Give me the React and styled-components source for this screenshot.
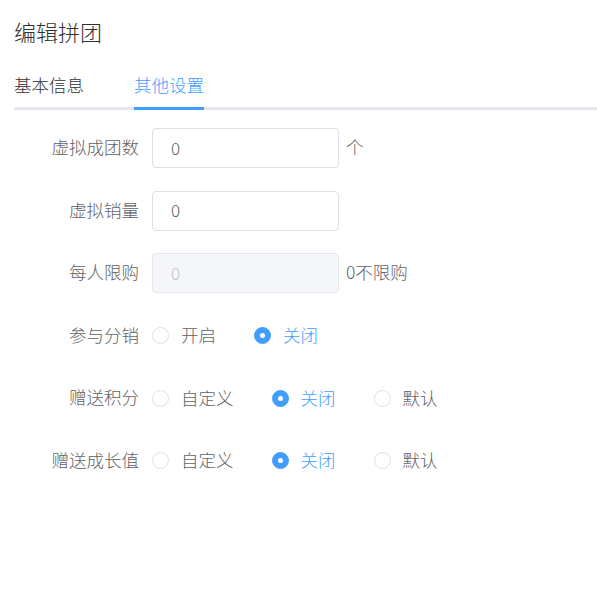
import React, { useState } from 'react';
import styled, { createGlobalStyle } from 'styled-components';

const GlobalStyle = createGlobalStyle`
  html, body {
    margin: 0;
    padding: 0;
    background: #fff;
  }
  body {
    font-family: "Noto Sans CJK SC", "Liberation Sans", sans-serif;
    font-weight: 300;
    -webkit-font-smoothing: antialiased;
  }
`;

const StyledPage = styled.div`
  padding: 0 0 0 14px;
  width: 583px;
`;

const StyledTitle = styled.h1`
  margin: 0;
  padding: 19px 0 21px;
  font-size: 22px;
  line-height: 24px;
  font-weight: 300;
  color: #303133;
`;

const StyledTabNav = styled.div`
  display: flex;
  gap: 50px;
  border-bottom: 3px solid #e4e7ed;
`;

const StyledTab = styled.div`
  font-size: 17.5px;
  line-height: 42px;
  padding-bottom: 1px;
  margin-bottom: -3px;
  color: ${props => (props.active ? '#409eff' : '#303133')};
  border-bottom: 3px solid ${props => (props.active ? '#409eff' : 'transparent')};
  cursor: pointer;
`;

const StyledForm = styled.form`
  display: flex;
  flex-direction: column;
  gap: 22.5px;
  margin-top: 18px;
`;

const StyledRow = styled.div`
  display: flex;
  align-items: center;
  height: 40px;
`;

const StyledLabel = styled.label`
  box-sizing: border-box;
  width: 138px;
  padding: 0 13px 3px 0;
  text-align: right;
  font-size: 17.5px;
  color: #606266;
  white-space: nowrap;
`;

const StyledInput = styled.input`
  box-sizing: border-box;
  width: 187px;
  height: 40px;
  padding: 0 18px 2px;
  border: 1px solid #dcdfe6;
  border-radius: 4px;
  font-family: inherit;
  font-weight: 300;
  font-size: 17px;
  color: #606266;
  background: #fff;
  outline: none;

  &:disabled {
    background: #f5f7fa;
    border-color: #e4e7ed;
    color: #c0c4cc;
  }
`;

const StyledSuffix = styled.span`
  margin-left: 7px;
  padding-bottom: 3px;
  font-size: 17.5px;
  color: #606266;
`;

const StyledRadioGroup = styled.div`
  display: flex;
  align-items: center;
  gap: 38px;
`;

const StyledRadio = styled.label`
  display: flex;
  align-items: center;
  gap: 12px;
  font-size: 17.5px;
  color: ${props => (props.checked ? '#409eff' : '#606266')};
  cursor: pointer;

  span + span {
    padding-bottom: 2px;
  }
`;

const StyledCircle = styled.span`
  box-sizing: border-box;
  width: 17px;
  height: 17px;
  border-radius: 50%;
  border: 1px solid ${props => (props.checked ? '#409eff' : '#dcdfe6')};
  background: ${props => (props.checked ? '#409eff' : '#fff')};
  display: flex;
  align-items: center;
  justify-content: center;

  &::after {
    content: '';
    width: 5px;
    height: 5px;
    border-radius: 50%;
    background: #fff;
    display: ${props => (props.checked ? 'block' : 'none')};
  }
`;

const RadioGroup = ({ options, value, onChange }) => (
  <StyledRadioGroup>
    {options.map(opt => (
      <StyledRadio key={opt} checked={opt === value} onClick={() => onChange(opt)}>
        <StyledCircle checked={opt === value} />
        <span>{opt}</span>
      </StyledRadio>
    ))}
  </StyledRadioGroup>
);

const App = () => {
  const [tab, setTab] = useState('其他设置');
  const [fenxiao, setFenxiao] = useState('关闭');
  const [jifen, setJifen] = useState('关闭');
  const [chengzhang, setChengzhang] = useState('关闭');

  return (
    <StyledPage>
      <GlobalStyle />
      <StyledTitle>编辑拼团</StyledTitle>

      <StyledTabNav>
        {['基本信息', '其他设置'].map(t => (
          <StyledTab key={t} active={t === tab} onClick={() => setTab(t)}>
            {t}
          </StyledTab>
        ))}
      </StyledTabNav>

      <StyledForm onSubmit={e => e.preventDefault()}>
        <StyledRow>
          <StyledLabel>虚拟成团数</StyledLabel>
          <StyledInput defaultValue="0" />
          <StyledSuffix>个</StyledSuffix>
        </StyledRow>
        <StyledRow>
          <StyledLabel>虚拟销量</StyledLabel>
          <StyledInput defaultValue="0" />
        </StyledRow>
        <StyledRow>
          <StyledLabel>每人限购</StyledLabel>
          <StyledInput defaultValue="0" disabled />
          <StyledSuffix>0不限购</StyledSuffix>
        </StyledRow>
        <StyledRow>
          <StyledLabel>参与分销</StyledLabel>
          <RadioGroup options={['开启', '关闭']} value={fenxiao} onChange={setFenxiao} />
        </StyledRow>
        <StyledRow>
          <StyledLabel>赠送积分</StyledLabel>
          <RadioGroup options={['自定义', '关闭', '默认']} value={jifen} onChange={setJifen} />
        </StyledRow>
        <StyledRow>
          <StyledLabel>赠送成长值</StyledLabel>
          <RadioGroup
            options={['自定义', '关闭', '默认']}
            value={chengzhang}
            onChange={setChengzhang}
          />
        </StyledRow>
      </StyledForm>
    </StyledPage>
  );
};

export default App;
